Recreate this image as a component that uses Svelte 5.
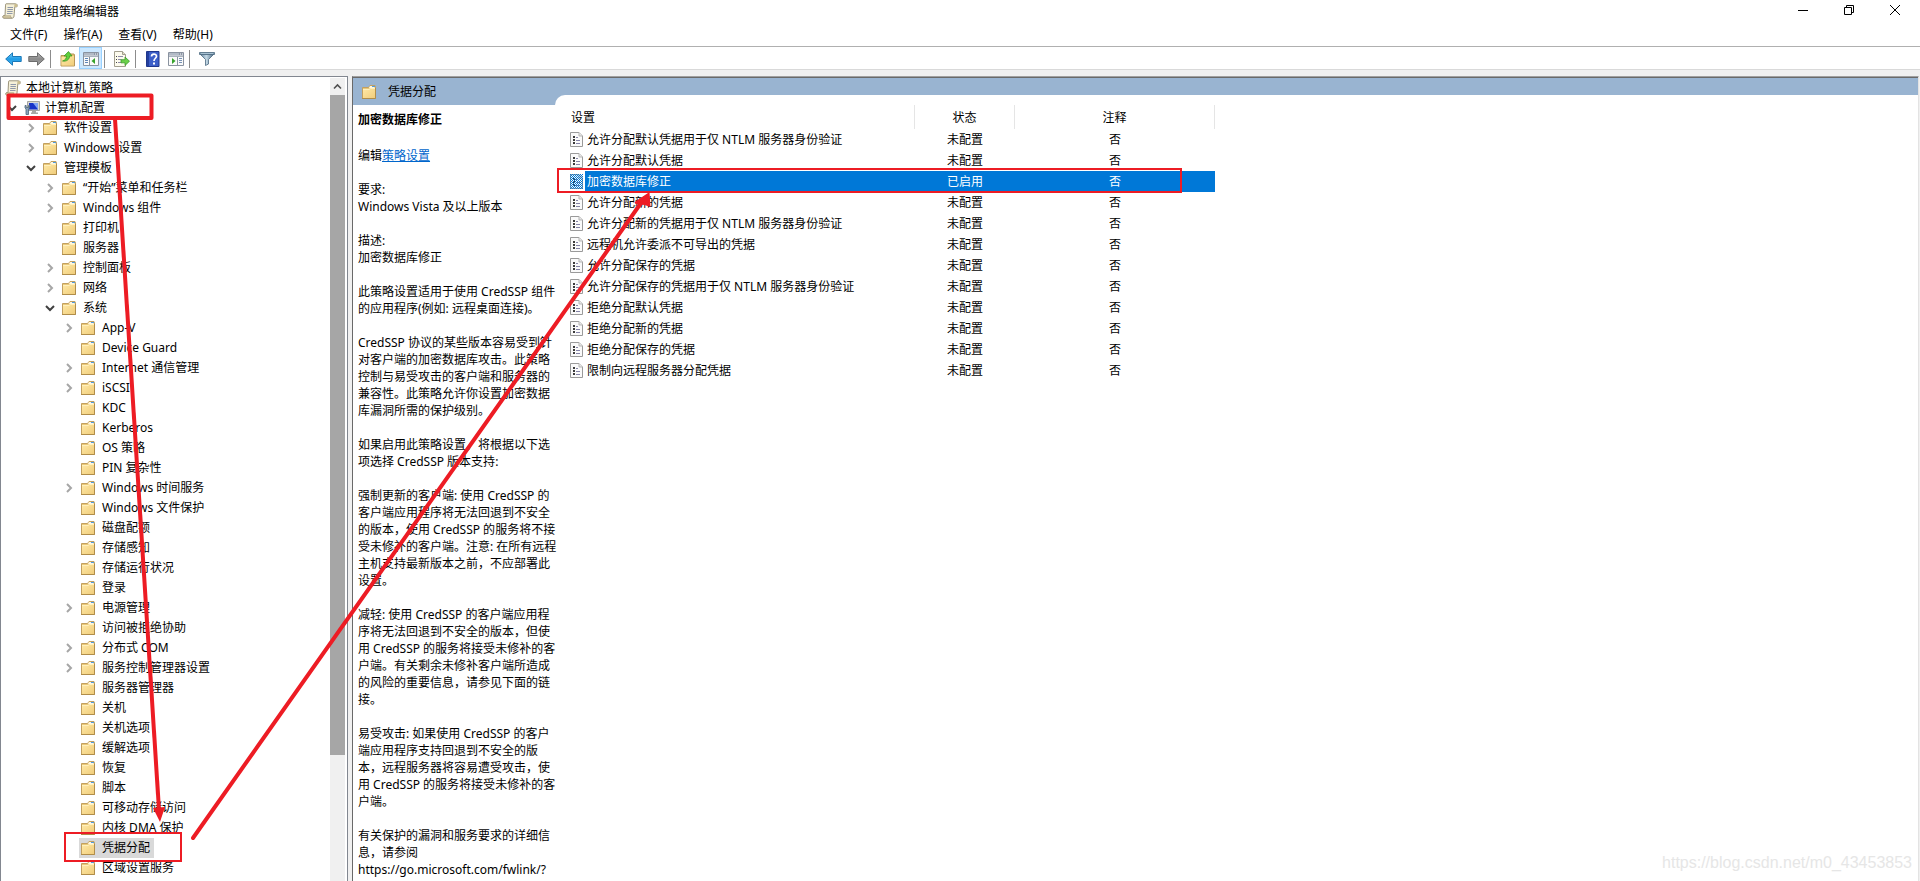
<script>
  const f = (label, open = false, children = null) => ({ label, icon: 'folder', open, children });
  const closed = [];

  const tree = {
    label: '本地计算机 策略',
    icon: 'scroll',
    open: true,
    children: [
      {
        label: '计算机配置',
        icon: 'computer',
        open: true,
        children: [
          f('软件设置', false, closed),
          f('Windows 设置', false, closed),
          f('管理模板', true, [
            f('“开始”菜单和任务栏', false, closed),
            f('Windows 组件', false, closed),
            f('打印机'),
            f('服务器'),
            f('控制面板', false, closed),
            f('网络', false, closed),
            f('系统', true, [
              f('App-V', false, closed),
              f('Device Guard'),
              f('Internet 通信管理', false, closed),
              f('iSCSI', false, closed),
              f('KDC'),
              f('Kerberos'),
              f('OS 策略'),
              f('PIN 复杂性'),
              f('Windows 时间服务', false, closed),
              f('Windows 文件保护'),
              f('磁盘配额'),
              f('存储感知'),
              f('存储运行状况'),
              f('登录'),
              f('电源管理', false, closed),
              f('访问被拒绝协助'),
              f('分布式 COM', false, closed),
              f('服务控制管理器设置', false, closed),
              f('服务器管理器'),
              f('关机'),
              f('关机选项'),
              f('缓解选项'),
              f('恢复'),
              f('脚本'),
              f('可移动存储访问'),
              f('内核 DMA 保护'),
              f('凭据分配'),
              f('区域设置服务')
            ])
          ])
        ]
      }
    ]
  };

  const menus = ['文件(F)', '操作(A)', '查看(V)', '帮助(H)'];

  const description = [
    ['要求:', 'Windows Vista 及以上版本'],
    ['描述:', '加密数据库修正'],
    ['此策略设置适用于使用 CredSSP 组件', '的应用程序(例如: 远程桌面连接)。'],
    [
      'CredSSP 协议的某些版本容易受到针',
      '对客户端的加密数据库攻击。此策略',
      '控制与易受攻击的客户端和服务器的',
      '兼容性。此策略允许你设置加密数据',
      '库漏洞所需的保护级别。'
    ],
    ['如果启用此策略设置，将根据以下选', '项选择 CredSSP 版本支持:'],
    [
      '强制更新的客户端: 使用 CredSSP 的',
      '客户端应用程序将无法回退到不安全',
      '的版本，使用 CredSSP 的服务将不接',
      '受未修补的客户端。注意: 在所有远程',
      '主机支持最新版本之前，不应部署此',
      '设置。'
    ],
    [
      '减轻: 使用 CredSSP 的客户端应用程',
      '序将无法回退到不安全的版本，但使',
      '用 CredSSP 的服务将接受未修补的客',
      '户端。有关剩余未修补客户端所造成',
      '的风险的重要信息，请参见下面的链',
      '接。'
    ],
    [
      '易受攻击: 如果使用 CredSSP 的客户',
      '端应用程序支持回退到不安全的版',
      '本，远程服务器将容易遭受攻击，使',
      '用 CredSSP 的服务将接受未修补的客',
      '户端。'
    ],
    ['有关保护的漏洞和服务要求的详细信', '息，请参阅', 'https://go.microsoft.com/fwlink/?']
  ];

  const policies = [
    ['允许分配默认凭据用于仅 NTLM 服务器身份验证', '未配置'],
    ['允许分配默认凭据', '未配置'],
    ['加密数据库修正', '已启用'],
    ['允许分配新的凭据', '未配置'],
    ['允许分配新的凭据用于仅 NTLM 服务器身份验证', '未配置'],
    ['远程机允许委派不可导出的凭据', '未配置'],
    ['允许分配保存的凭据', '未配置'],
    ['允许分配保存的凭据用于仅 NTLM 服务器身份验证', '未配置'],
    ['拒绝分配默认凭据', '未配置'],
    ['拒绝分配新的凭据', '未配置'],
    ['拒绝分配保存的凭据', '未配置'],
    ['限制向远程服务器分配凭据', '未配置']
  ];

  let selectedNode = $state('凭据分配');
  let selectedPolicy = $state(2);
</script>

{#snippet folderIcon()}
  <svg class="icon" width="16" height="16" viewBox="1 0 16 16" aria-hidden="true">
    <path d="M1.500 3.500h6l1.500-2h5l.5 1v12h-13z" fill="#e9c878" stroke="#c2a060" />
    <path d="M9 2h4.500v2H8z" fill="#fdf6e0" />
    <path d="M11 2h3v1h-3z" fill="#4f9be0" />
    <path d="M2 5h6l1.500-1H14v10H2z" fill="url(#folderFill)" />
    <path d="M2 5.500h6l1.500-1H14" fill="none" stroke="#fff0bd" />
    <path d="M1 14.500h13.500V4" fill="none" stroke="#b08d4a" />
  </svg>
{/snippet}

{#snippet scrollIcon()}
  <svg class="icon" width="16" height="16" viewBox="0 0 16 16" aria-hidden="true">
    <path d="M4 .8h9.500c1.500 0 2 1 1.500 3h-2.200L12 13c0 1.500-.8 2.200-2 2.200H1.800C.6 15.200.4 13 1.500 12.500H3L3.500 3C3.500 1.600 3.500 1 4 .8z" fill="#f5f0d8" stroke="#9b947c" />
    <path d="M13 1c-1 .6-.8 2-.5 3H15c.6-1.800 0-3-1-3z" fill="#cbbd8e" />
    <path d="M1.500 12.800h7.300c-.4 1 0 2 1 2.200H2c-1 0-1.300-1.500-.5-2.200z" fill="#d9cda4" stroke="#a39a7b" stroke-width=".7" />
    <path d="M5.500 4.500h5.500M5.400 6.500h5.500M5.200 8.500h5.500M5 10.500h5.500" stroke="#8f98aa" />
  </svg>
{/snippet}

{#snippet computerIcon()}
  <svg class="icon" width="16" height="16" viewBox="0 0 16 16" aria-hidden="true">
    <path d="M3.500 1.500h12v9h-12z" fill="#d8d8d4" stroke="#a5a5a0" />
    <path d="M5 3h9v6.500H5z" fill="#1733c8" />
    <path d="M9 3h5v6.500z" fill="#7fa3f2" />
    <path d="M8 11h4v1.500h2V14H7v-1.500h1z" fill="#a8a8a4" />
    <path d="M1 5.500v2.500l1 1v5.500h2.500V9l1-1V5.500H4.500v2H2.200v-2z" fill="#8aa3ba" stroke="#4d6478" stroke-width=".8" />
  </svg>
{/snippet}

{#snippet panelIcon(flip)}
  <svg width="16" height="14" viewBox="0 0 16 14" aria-hidden="true">
    <path d="M.5.500h15v13H.5z" fill="#fafafa" stroke="#8a93a0" />
    <path d="M1 1h14v2.500H1z" fill="#8d97a6" />
    <path d="M1 2h10" stroke="#d7dde5" />
    <path d="M12 2h1M14 2h1" stroke="#fff" />
    <path d="M1 4.500h14" stroke="#a9b2bd" />
    {#if flip}
      <path d="M9.500 5v8" stroke="#8a93a0" />
      <path d="M11 6.500h3M11 8.500h3M11 10.500h3" stroke="#7893b5" />
      <path d="M4 6l3.500 3L4 12z" fill="#36a32b" />
    {:else}
      <path d="M6.500 5v8" stroke="#8a93a0" />
      <path d="M2 6.500h3M2 8.500h3M2 10.500h3" stroke="#5f86b8" />
      <path d="M12 6L8.500 9l3.500 3z" fill="#36a32b" />
    {/if}
  </svg>
{/snippet}

{#snippet chevron(open)}
  {#if open}
    <svg width="10" height="10" viewBox="0 0 10 10" aria-hidden="true">
      <path d="M1 3l4 4 4-4" fill="none" stroke="#404040" stroke-width="2" />
    </svg>
  {:else}
    <svg width="10" height="10" viewBox="0 0 10 10" aria-hidden="true">
      <path d="M3 1l4 4-4 4" fill="none" stroke="#a6a6a6" stroke-width="2" />
    </svg>
  {/if}
{/snippet}

{#snippet node(item, root)}
  <li>
    <div class="row">
      {#if !root}
        <span class="twist">{#if item.children}{@render chevron(item.open)}{/if}</span>
      {/if}
      <button class="label" class:selected={selectedNode === item.label} onclick={() => (selectedNode = item.label)}>
        {#if item.icon === 'folder'}{@render folderIcon()}{:else if item.icon === 'scroll'}{@render scrollIcon()}{:else}{@render computerIcon()}{/if}
        <span>{item.label}</span>
      </button>
    </div>
    {#if item.open && item.children}
      <ul class:nested={!root}>
        {#each item.children as child}
          {@render node(child, false)}
        {/each}
      </ul>
    {/if}
  </li>
{/snippet}

<svg class="defs" width="0" height="0" aria-hidden="true">
  <defs>
    <linearGradient id="folderFill" x1="0" y1="0" x2="1" y2="1">
      <stop offset="0" stop-color="#ffe9a6" />
      <stop offset="1" stop-color="#f0cd7c" />
    </linearGradient>
    <linearGradient id="blueArrow" x1="0" y1="0" x2="0" y2="1">
      <stop offset="0" stop-color="#7fd0f7" />
      <stop offset=".5" stop-color="#1e9be6" />
      <stop offset="1" stop-color="#4cb8f2" />
    </linearGradient>
    <linearGradient id="grayArrow" x1="0" y1="0" x2="0" y2="1">
      <stop offset="0" stop-color="#bdbdbd" />
      <stop offset=".5" stop-color="#8a8a8a" />
      <stop offset="1" stop-color="#a5a5a5" />
    </linearGradient>
    <linearGradient id="funnel" x1="0" y1="0" x2="1" y2="0">
      <stop offset="0" stop-color="#5e7f99" />
      <stop offset=".45" stop-color="#c4d9e6" />
      <stop offset="1" stop-color="#47667f" />
    </linearGradient>
    <pattern id="dither" width="2" height="2" patternUnits="userSpaceOnUse">
      <path d="M0 0h1v1H0zM1 1h1v1H1z" fill="#0078d7" />
    </pattern>
  </defs>
</svg>

<div class="window">
  <header class="titlebar">
    {@render scrollIcon()}
    <h1>本地组策略编辑器</h1>
    <div class="controls">
      <button aria-label="最小化"><svg width="10" height="10" viewBox="0 0 10 10"><path d="M0 5.500h10" stroke="#000" /></svg></button>
      <button aria-label="还原"><svg width="10" height="10" viewBox="0 0 10 10"><path d="M.5 2.500h7v7h-7zM2.500 2.500v-2h7v7h-2" fill="none" stroke="#000" /></svg></button>
      <button aria-label="关闭"><svg width="10" height="10" viewBox="0 0 10 10"><path d="M0 0l10 10M10 0L0 10" stroke="#000" /></svg></button>
    </div>
  </header>

  <nav class="menubar">
    {#each menus as m}<button>{m}</button>{/each}
  </nav>

  <div class="toolbar" role="toolbar">
    <button aria-label="后退">
      <svg width="17" height="14" viewBox="0 0 17 14"><path d="M.7 7L7.500.8v3.700h8.700v5H7.500v3.700z" fill="url(#blueArrow)" stroke="#1b78b8" stroke-linejoin="round" /></svg>
    </button>
    <button aria-label="前进">
      <svg width="17" height="14" viewBox="0 0 17 14"><path d="M16.300 7L9.500.8v3.700H.8v5h8.700v3.700z" fill="url(#grayArrow)" stroke="#6c6c6c" stroke-linejoin="round" /></svg>
    </button>
    <span class="sep"></span>
    <button aria-label="向上一级">
      <svg width="16" height="16" viewBox="0 0 16 16">
        <path d="M1 4.500h7l1.500-1.500H14l.5 1v11H1z" fill="#e6c374" stroke="#b8975a" />
        <path d="M1.500 6h6.500l1.500-1H14v9.500H1.500z" fill="url(#folderFill)" />
        <path d="M2.500 10C5 9.500 6.500 7.500 6.500 5H4L8.500.5 12 5H9.700C9.500 8.500 6.500 10.800 2.500 10z" fill="#5fcf3c" stroke="#2f8f1e" stroke-width=".7" />
      </svg>
    </button>
    <button class="active" aria-label="显示/隐藏控制台树">{@render panelIcon(false)}</button>
    <span class="sep"></span>
    <button aria-label="导出列表">
      <svg width="17" height="16" viewBox="0 0 17 16">
        <path d="M1.500.5h8l3 3v12h-11z" fill="#fdfbee" stroke="#a29f8e" />
        <path d="M9.500.5v3h3" fill="#e3dfca" stroke="#a29f8e" />
        <path d="M3 5.500h1M3 8.500h1M3 11.500h1" stroke="#444" />
        <path d="M5 5.500h5M5 8.500h3M5 11.500h3" stroke="#8d8ba8" />
        <path d="M8 8.700h4V6l4.500 4.200L12 14.500v-2.700H8z" fill="#6bd14b" stroke="#3b9a28" stroke-width=".8" />
      </svg>
    </button>
    <span class="sep"></span>
    <button aria-label="帮助">
      <svg width="14" height="16" viewBox="0 0 14 16">
        <path d="M.5.500h12.500v15H.5z" fill="#3d5fc9" stroke="#20378c" />
        <path d="M1 1h2v14H1z" fill="#233f9e" />
        <path d="M5.500 5.500c0-3.200 5-3.200 5-.3 0 2-2.500 2.200-2.500 4.800" fill="none" stroke="#fff" stroke-width="1.700" />
        <path d="M7 11.500h2v2H7z" fill="#fff" />
      </svg>
    </button>
    <button aria-label="显示/隐藏操作窗格">{@render panelIcon(true)}</button>
    <span class="sep"></span>
    <button aria-label="筛选器">
      <svg width="16" height="14" viewBox="0 0 16 14">
        <path d="M1 2l5.500 5.500v6l3-1.500V7.500L15 2z" fill="url(#funnel)" stroke="#4c6a80" stroke-width=".8" />
        <path d="M.5.500h15v2H.5z" fill="#7d9bb0" stroke="#4c6a80" stroke-width=".8" />
        <path d="M2 1.500h12" stroke="#a7c1d2" />
      </svg>
    </button>
  </div>

  <main class="workspace">
    <aside class="tree-pane">
      <ul class="tree">{@render node(tree, true)}</ul>
      <div class="scrollbar">
        <button aria-label="向上滚动"><svg width="9" height="9" viewBox="0 0 9 9"><path d="M1 6.500L4.500 3 8 6.500" fill="none" stroke="#505050" stroke-width="1.600" /></svg></button>
        <span class="thumb"></span>
        <span class="track"></span>
      </div>
    </aside>

    <section class="result-pane">
      <div class="pane-title">
        {@render folderIcon()}
        <span>凭据分配</span>
      </div>
      <div class="split">
        <article class="details">
          <h2>加密数据库修正</h2>
          <p>编辑<a href="#policy">策略设置</a></p>
          {#each description as lines}
            <p>{#each lines as line}<span class="line">{line}</span>{/each}</p>
          {/each}
        </article>
        <div class="list">
          <table>
            <thead>
              <tr><th class="name">设置</th><th class="state">状态</th><th class="note">注释</th></tr>
            </thead>
            <tbody>
              {#each policies as [name, state], i}
                <tr class:selected={selectedPolicy === i} onclick={() => (selectedPolicy = i)}>
                  <td>
                    <div class="policy">
                      <svg width="13" height="15" viewBox="0 0 13 15" aria-hidden="true">
                        <path d="M.5.500h8.500l3.500 3.500v10.500H.5z" fill="#fafafa" stroke="#9a9a9a" />
                        <path d="M9 .5v3.500h3.500" fill="#e8e8e8" stroke="#b5b5b5" />
                        <path d="M3 4h2v2H3zM3 7h2v2H3zM3 10h2v2H3z" fill="#3a3a3a" />
                        <path d="M6 5.500h2M6 8.500h4M6 11.500h4" stroke="#8584a8" />
                        {#if selectedPolicy === i}<path d="M0 0h13v15H0z" fill="url(#dither)" />{/if}
                      </svg>
                      <span>{name}</span>
                    </div>
                  </td>
                  <td>{state}</td>
                  <td>否</td>
                </tr>
              {/each}
            </tbody>
          </table>
        </div>
      </div>
    </section>
  </main>

  <svg class="marks" width="1200" height="881" viewBox="0 0 1200 881" aria-hidden="true">
    <g fill="none" stroke="#ed1c24">
      <rect x="8.500" y="95.500" width="143" height="22.500" stroke-width="4" stroke-linejoin="round" />
      <rect x="65" y="833" width="116" height="28" stroke-width="2" />
      <rect x="558" y="169" width="623" height="23" stroke-width="2" />
      <path d="M115 119L159 810" stroke-width="4" />
      <path d="M193 838L641 203" stroke-width="4" stroke-linecap="round" />
    </g>
    <path d="M153 808l12-1-5 15z" fill="#ed1c24" />
    <path d="M649.500 192l1 15-6-2-9-1-1-2z" fill="#ed1c24" />
  </svg>
  <span class="watermark">https://blog.csdn.net/m0_43453853</span>
</div>

<style>
  :global(body) {
    margin: 0;
    background: #fff;
  }
  .defs {
    position: absolute;
  }
  .window {
    position: relative;
    display: flex;
    flex-direction: column;
    height: 100vh;
    overflow: hidden;
    background: #fff;
    color: #000;
    font: 12px/20px 'Noto Sans', 'Noto Sans CJK SC', sans-serif;
  }
  .window :is(button) {
    display: flex;
    align-items: center;
    justify-content: center;
    border: 0;
    padding: 0;
    background: none;
    color: inherit;
    font: inherit;
    white-space: nowrap;
  }
  svg {
    flex: none;
  }
  h1,
  h2 {
    margin: 0;
    font-size: 12px;
  }

  .titlebar {
    display: flex;
    align-items: center;
    height: 22px;
    padding-left: 2px;
    gap: 5px;
  }
  .titlebar h1 {
    flex: 1;
    padding-top: 2px;
    font-weight: 400;
  }
  .controls {
    display: flex;
    align-self: flex-start;
    padding-right: 2px;
  }
  .controls button {
    width: 46px;
    height: 20px;
  }

  .menubar {
    display: flex;
    height: 24px;
    padding-left: 2px;
    border-bottom: 1px solid #b0b0b0;
  }
  .menubar button {
    padding: 2px 8px 0;
  }

  .toolbar {
    display: flex;
    height: 22px;
    padding-left: 2px;
    border-bottom: 1px solid #d9d9d9;
  }
  .toolbar button {
    box-sizing: border-box;
    width: 23px;
    height: 22px;
    padding-top: 2px;
  }
  .toolbar .active {
    border: 1px solid #99d1ff;
    background: #cce8ff;
  }
  .sep {
    width: 1px;
    height: 18px;
    margin: 3px 5px 0 2px;
    background: #8c8c8c;
  }

  .workspace {
    flex: 1;
    display: flex;
    gap: 4px;
    min-height: 0;
    padding: 6px 1px 0 0;
    background: #f0f0f0;
  }
  .tree-pane {
    box-sizing: border-box;
    flex: none;
    display: flex;
    width: 348px;
    overflow: hidden;
    padding: 1px 2px 0 0;
    border: 1px solid #828790;
    border-bottom: 0;
    background: #fff;
  }
  ul {
    list-style: none;
    margin: 0;
    padding: 0;
  }
  .tree {
    flex: 1;
    padding-left: 2px;
  }
  .nested {
    padding-left: 19px;
  }
  .row {
    display: flex;
    height: 20px;
  }
  .twist {
    display: flex;
    align-items: center;
    justify-content: center;
    width: 17px;
    padding-right: 2px;
  }
  .row .label {
    gap: 5px;
    height: 20px;
    padding: 0 4px 0 2px;
  }
  .label.selected {
    background: #d9d9d9;
  }
  .scrollbar {
    flex: none;
    display: flex;
    flex-direction: column;
    width: 15px;
    background: #f0f0f0;
  }
  .scrollbar button {
    height: 17px;
  }
  .thumb {
    flex: 84;
    background: #a6a6a6;
  }
  .track {
    flex: 16;
  }

  .result-pane {
    flex: 1;
    display: flex;
    flex-direction: column;
    min-width: 0;
    border: 1px solid #696969;
    border-top-color: #a0a0a0;
    border-right-color: #e3e3e3;
    border-bottom: 0;
    background: #fff;
  }
  .pane-title {
    flex: none;
    display: flex;
    align-items: center;
    gap: 10px;
    height: 27px;
    padding-left: 9px;
    border-top: 1px solid #696969;
    background: #99b4d1;
  }
  .pane-title span {
    padding-top: 1px;
  }
  .split {
    flex: 1;
    display: flex;
    min-height: 0;
  }
  .details {
    box-sizing: border-box;
    flex: none;
    width: 202px;
    padding: 6px 0 0 5px;
    line-height: 17px;
    white-space: nowrap;
    position: relative;
    z-index: 1;
  }
  .details h2 {
    margin-bottom: 19px;
  }
  .details p {
    margin: 0 0 17px;
  }
  .line {
    display: block;
  }
  a {
    color: #0066cc;
  }
  .list {
    flex: 1;
    margin-top: -10px;
    padding: 10px 0 0 10px;
    border-top-left-radius: 10px;
    background: #fff;
  }
  table {
    border-collapse: separate;
    border-spacing: 0;
    table-layout: fixed;
    width: 650px;
  }
  th,
  td {
    box-sizing: border-box;
    height: 21px;
    padding: 1px 0 0;
    text-align: center;
    font-weight: 400;
  }
  td:first-child {
    padding: 0;
  }
  th {
    height: 24px;
    border-right: 1px solid #e5e5e5;
  }
  .name {
    width: 350px;
    padding-left: 6px;
    text-align: left;
  }
  .state {
    width: 100px;
  }
  .policy {
    display: flex;
    align-items: center;
    gap: 2px;
    padding-left: 5px;
  }
  .policy span {
    box-sizing: border-box;
    flex: 1;
    height: 21px;
    padding: 1px 0 0 2px;
    text-align: left;
  }
  .selected td,
  .selected .policy span {
    background: #0078d7;
    color: #fff;
  }
  .selected td:first-child {
    background: none;
  }

  .marks {
    position: absolute;
    top: 0;
    left: 0;
    z-index: 2;
    pointer-events: none;
  }
  .watermark {
    position: absolute;
    right: 8px;
    bottom: 8px;
    color: #e6e6e6;
    font: 16px/20px 'Liberation Sans', Arial, sans-serif;
  }
</style>
